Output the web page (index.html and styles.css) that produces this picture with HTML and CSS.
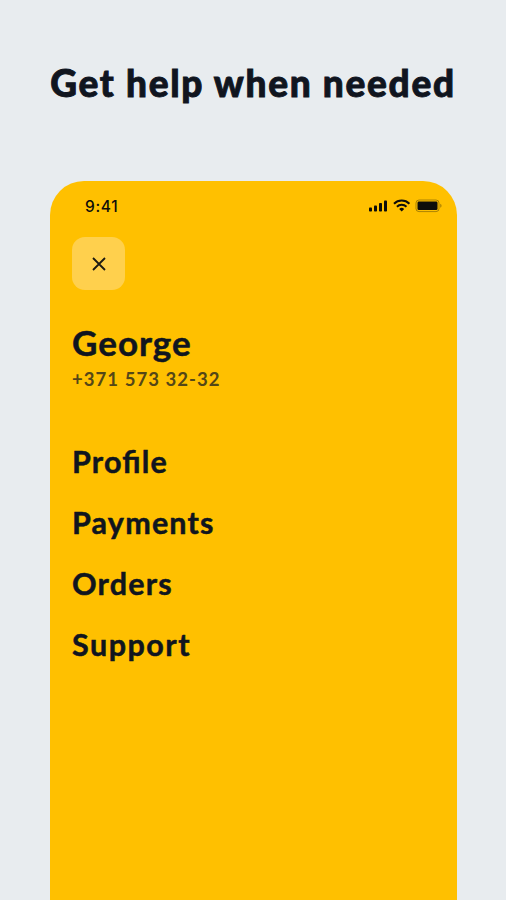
FILE: index.html
```html
<!DOCTYPE html>
<html lang="en">
<head>
  <meta charset="UTF-8" />
  <title>Get help when needed</title>
  <link rel="stylesheet" href="styles.css">
</head>
<body>
  <h1>Get help when needed</h1>

  <div class="phone">
    <div class="status-bar">
      <span class="time">9:41</span>
      <svg class="status-icons" width="74" height="16" viewBox="0 0 74 16">
        <!-- signal -->
        <rect x="1" y="9.5" width="3" height="4" rx="0.8" />
        <rect x="6" y="7.5" width="3" height="6" rx="0.8" />
        <rect x="11" y="5" width="3" height="8.5" rx="0.8" />
        <rect x="16" y="2.5" width="3" height="11" rx="0.8" />
        <!-- wifi -->
        <g fill="none" stroke="#0d0d0b" stroke-width="2">
          <path d="M26 5.7 A10.9 10.9 0 0 1 41.4 5.7" />
          <path d="M28.9 8.8 A6.8 6.8 0 0 1 38.5 8.8" />
        </g>
        <path d="M31.2 11 A3.6 3.6 0 0 1 36.2 11 L33.7 13.6 Z" />
        <!-- battery -->
        <rect x="48" y="2" width="23" height="11.6" rx="3" fill="none" stroke="#0d0d0b" stroke-opacity="0.35" />
        <rect x="49.5" y="3.6" width="20" height="8.4" rx="1.3" />
        <path d="M72.3 5.8 v4 c1.6 -0.7 1.6 -3.3 0 -4z" fill-opacity="0.4" />
      </svg>
    </div>

    <button class="close" aria-label="Close">
      <svg width="14" height="14" viewBox="0 0 14 14">
        <path d="M1 1 L13 13 M13 1 L1 13" />
      </svg>
    </button>

    <div class="name">George</div>
    <div class="number">+371 573 32-32</div>

    <nav>
      <a class="profile">Profile</a>
      <a class="payments">Payments</a>
      <a class="orders">Orders</a>
      <a class="support">Support</a>
    </nav>
  </div>
</body>
</html>
```

FILE: styles.css
```css
body {
  margin: 0;
  height: 900px;
  display: flex;
  flex-direction: column;
  align-items: center;
  overflow: hidden;
  background-color: #e8ecef;
  color: #10151f;
  font-family: Lato, "Open Sans", sans-serif;
  font-weight: bold;
  white-space: nowrap;
}

h1 {
  margin: 59px 0 0;
  height: 122px;
  font-size: 37px;
  font-weight: 900;
  line-height: 48px;
  letter-spacing: 1.7px;
  -webkit-text-stroke: 0.9px;
}

.phone {
  box-sizing: border-box;
  width: 407px;
  flex: 1;
  margin-left: 1px;
  padding: 0 15px 0 22px;
  background-color: #ffc000;
  border-radius: 34px 34px 0 0;
}

.status-bar {
  display: flex;
  justify-content: space-between;
  align-items: center;
  height: 50px;
  padding-left: 13px;
}

.time {
  color: #0d0d0b;
  font-family: Inter, sans-serif;
  font-size: 15.5px;
  font-weight: 500;
  letter-spacing: 0.7px;
}

.status-icons {
  fill: #0d0d0b;
}

.close {
  display: flex;
  align-items: center;
  justify-content: center;
  width: 53px;
  height: 53px;
  margin: 6px 0 0;
  padding: 0;
  border: none;
  border-radius: 13px;
  background-color: #ffd04d;
}

.close path {
  stroke: #1d1a12;
  stroke-width: 1.8;
}

.name {
  margin-top: 32px;
  font-size: 35px;
  line-height: 40px;
  letter-spacing: 1px;
  -webkit-text-stroke: 0.5px;
}

.number {
  margin-top: 5px;
  color: #544717;
  font-size: 18.5px;
  line-height: 24px;
  letter-spacing: 1.05px;
}

nav {
  display: flex;
  flex-direction: column;
  gap: 21px;
  margin-top: 50px;
  font-size: 30.5px;
  line-height: 40px;
  letter-spacing: 1.2px;
  font-feature-settings: "liga";
  -webkit-text-stroke: 0.5px;
}

.support {
  letter-spacing: 1.5px;
}
```
